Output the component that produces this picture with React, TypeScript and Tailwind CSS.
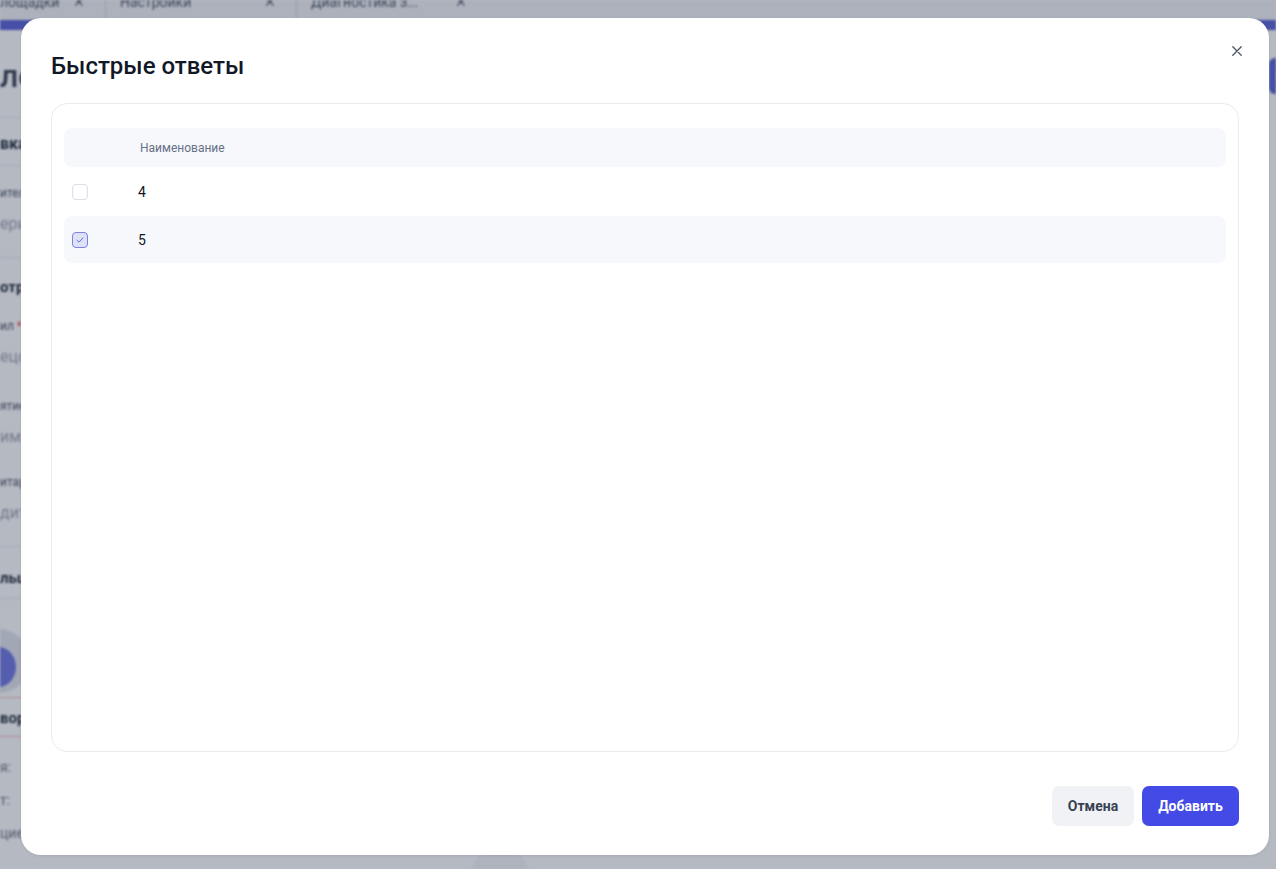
import React, { useState } from "react";

const font = { fontFamily: "Roboto, 'Noto Sans', 'Liberation Sans', sans-serif" };

function BackgroundPage() {
  return (
    <div className="absolute inset-0 overflow-hidden bg-white blur-[1.2px] text-[#4b5563]" style={font}>
      {/* tab strip */}
      <div className="flex h-[20px] items-end overflow-hidden bg-[#f3f4f6] text-[14px] text-[#4b5563]">
        <div className="flex h-[36px] w-[106px] items-center justify-between border-r border-[#cfd3da] pr-[20px]">
          <span>лощадки</span>
          <span>✕</span>
        </div>
        <div className="flex h-[36px] w-[191px] items-center justify-between border-r border-[#cfd3da] pl-[14px] pr-[20px]">
          <span>Настройки</span>
          <span>✕</span>
        </div>
        <div className="flex h-[36px] w-[190px] items-center justify-between pl-[14px] pr-[20px]">
          <span>Диагностика з...</span>
          <span>✕</span>
        </div>
      </div>
      <div className="h-[10px] bg-[#5b61d6]" />
      <div className="flex">
        <div className="w-[60px] shrink-0">
          <div className="h-[70px] pt-[30px] text-[32px] font-medium leading-none text-[#374151]">ле</div>
          <div className="h-[18px] border-b border-[#e5e7eb]" />
          <div className="h-[48px] border-b border-[#e5e7eb] pt-[14px] text-[16px] font-bold text-[#1f2937]">вка</div>
          <div className="pt-[18px] text-[12px]">ител</div>
          <div className="pt-[10px] text-[16px] text-[#9ca3af]">ери</div>
          <div className="h-[22px] border-b border-[#e5e7eb]" />
          <div className="pt-[18px] text-[15px] font-bold text-[#1f2937]">отру</div>
          <div className="pt-[18px] text-[12px]">ил <span className="text-[#ef4444]">*</span></div>
          <div className="pt-[10px] text-[16px] text-[#9ca3af]">ецо</div>
          <div className="pt-[28px] text-[12px]">ятие</div>
          <div className="pt-[10px] text-[16px] text-[#9ca3af]">им.н</div>
          <div className="pt-[24px] text-[12px]">итар</div>
          <div className="pt-[10px] text-[16px] text-[#9ca3af]">дит</div>
          <div className="h-[22px] border-b border-[#e5e7eb]" />
          <div className="h-[52px] border-b border-[#e5e7eb] pt-[20px] text-[15px] font-bold text-[#1f2937]">льц</div>
          <div className="relative h-[98px]">
            <div className="absolute -left-[34px] top-[30px] h-[64px] w-[64px] rounded-full bg-[#e3e5ee]" />
            <div className="absolute -left-[20px] top-[48px] h-[40px] w-[36px] rounded-[50%] bg-[#7076e2]" />
          </div>
          <div className="h-[40px] border-y border-[#f2b8bd] pt-[9px] text-[15px] font-bold text-[#1f2937]">вор</div>
          <div className="pt-[20px] text-[14px] text-[#6b7280]">я:</div>
          <div className="pt-[12px] text-[14px] text-[#6b7280]">т:</div>
          <div className="pt-[12px] text-[14px] text-[#6b7280]">цие</div>
        </div>
        <div className="flex-1" />
        <div className="w-[60px] shrink-0 pl-[53px] pt-[28px]">
          <div className="flex h-[36px] w-[60px] items-center rounded-l-[6px] bg-[#5b61d6] pl-[6px] text-[14px] font-bold text-white">З</div>
        </div>
      </div>
      <div className="absolute left-[470px] top-[848px] h-[60px] w-[60px] rounded-full bg-[#f5f6fa]" />
    </div>
  );
}

function Checkbox({ checked, onChange }: { checked: boolean; onChange: () => void }) {
  return (
    <button
      type="button"
      onClick={onChange}
      className={
        checked
          ? "flex h-[16px] w-[16px] items-center justify-center rounded-[4px] border border-[#7b81e6] bg-[#dfe1f7]"
          : "flex h-[16px] w-[16px] items-center justify-center rounded-[4px] border border-[#dcdeea] bg-white"
      }
    >
      {checked && (
        <svg width="10" height="10" viewBox="0 0 10 10" fill="none">
          <path d="M2 5.2 4.1 7.2 8 2.8" stroke="#6a70e0" strokeWidth="1" strokeLinecap="round" strokeLinejoin="round" />
        </svg>
      )}
    </button>
  );
}

export default function App() {
  const [selected, setSelected] = useState<Record<string, boolean>>({ "4": false, "5": true });
  const rows = ["4", "5"];

  return (
    <div className="relative h-[869px] w-[1276px] overflow-hidden" style={font}>
      <BackgroundPage />
      <div className="absolute inset-0 bg-[#1e2946]/[0.33]" />

      {/* dialog */}
      <div className="absolute left-[21px] top-[18px] flex h-[837px] w-[1248px] flex-col rounded-[20px] bg-white px-[30px] pb-[29px] pt-[32px] shadow-[0_1px_3px_rgba(0,0,0,0.08)]">
        <button type="button" className="absolute right-[27px] top-[28px] flex h-[10px] w-[10px] items-center justify-center">
          <svg width="10" height="10" viewBox="0 0 10 10" fill="none">
            <path d="M0.8 0.8 9.2 9.2M9.2 0.8 0.8 9.2" stroke="#4b5563" strokeWidth="1.3" strokeLinecap="round" />
          </svg>
        </button>

        <h2 className="h-[32px] text-[24px] font-medium leading-[32px] text-[#111827]">Быстрые ответы</h2>

        <div className="mt-[21px] flex-1 rounded-[16px] border border-[#eaebef] px-[12px] pt-[24px]">
          <div className="flex h-[39px] items-center rounded-[8px] bg-[#f7f8fc]">
            <div className="w-[76px]" />
            <div className="text-[12px] text-[#667085]">Наименование</div>
          </div>
          {rows.map((r) => (
            <div
              key={r}
              className={
                selected[r]
                  ? "mt-[1px] flex h-[47px] items-center rounded-[8px] bg-[#f7f8fc]"
                  : "mt-[1px] flex h-[47px] items-center rounded-[8px]"
              }
            >
              <div className="w-[74px] pl-[8px]">
                <Checkbox checked={selected[r]} onChange={() => setSelected({ ...selected, [r]: !selected[r] })} />
              </div>
              <div className="pt-[2px] text-[14px] text-[#111827]">{r}</div>
            </div>
          ))}
        </div>

        <div className="mt-[34px] flex justify-end gap-[8px]">
          <button type="button" className="h-[40px] w-[82px] rounded-[7px] bg-[#f1f2f6] text-[14px] font-bold text-[#374151]">
            Отмена
          </button>
          <button type="button" className="h-[40px] w-[97px] rounded-[7px] bg-[#434ae6] text-[14px] font-bold text-white">
            Добавить
          </button>
        </div>
      </div>
    </div>
  );
}
